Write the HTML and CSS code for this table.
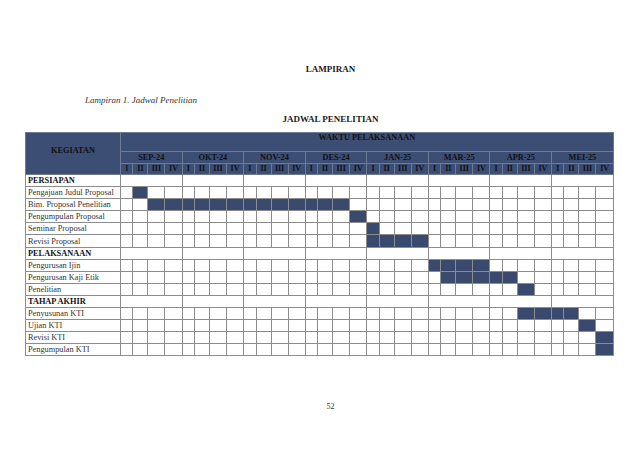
FILE: index.html
```html
<!DOCTYPE html>
<html lang="id">
<head>
<meta charset="utf-8">
<title>Lampiran - Jadwal Penelitian</title>
<link rel="stylesheet" href="styles.css">
</head>
<body>
<div class="page">
  <h1 class="title">LAMPIRAN</h1>
  <p class="caption">Lampiran 1. Jadwal Penelitian</p>
  <h2 class="heading">JADWAL PENELITIAN</h2>
  <table class="gantt">
    <colgroup>
      <col class="c-act">
      <col class="w1"><col class="w2"><col class="w3"><col class="w4">
      <col class="w1"><col class="w2"><col class="w3"><col class="w4">
      <col class="w1"><col class="w2"><col class="w3"><col class="w4">
      <col class="w1"><col class="w2"><col class="w3"><col class="w4">
      <col class="w1"><col class="w2"><col class="w3"><col class="w4">
      <col class="w1"><col class="w2"><col class="w3"><col class="w4">
      <col class="w1"><col class="w2"><col class="w3"><col class="w4">
      <col class="w1"><col class="w2"><col class="w3"><col class="w4">
    </colgroup>
    <thead>
      <tr class="h1">
        <th rowspan="3" class="kegiatan">KEGIATAN</th>
        <th colspan="32" class="waktu">WAKTU PELAKSANAAN</th>
      </tr>
      <tr class="h2">
        <th colspan="4">SEP-24</th>
        <th colspan="4">OKT-24</th>
        <th colspan="4">NOV-24</th>
        <th colspan="4">DES-24</th>
        <th colspan="4">JAN-25</th>
        <th colspan="4">MAR-25</th>
        <th colspan="4">APR-25</th>
        <th colspan="4">MEI-25</th>
      </tr>
      <tr class="h3">
        <th>I</th><th>II</th><th>III</th><th>IV</th>
        <th>I</th><th>II</th><th>III</th><th>IV</th>
        <th>I</th><th>II</th><th>III</th><th>IV</th>
        <th>I</th><th>II</th><th>III</th><th>IV</th>
        <th>I</th><th>II</th><th>III</th><th>IV</th>
        <th>I</th><th>II</th><th>III</th><th>IV</th>
        <th>I</th><th>II</th><th>III</th><th>IV</th>
        <th>I</th><th>II</th><th>III</th><th>IV</th>
      </tr>
    </thead>
    <tbody>
      <tr class="cat">
        <td class="act">PERSIAPAN</td>
        <td colspan="4"></td><td colspan="4"></td><td colspan="4"></td><td colspan="4"></td>
        <td colspan="4"></td><td colspan="4"></td><td colspan="4"></td><td colspan="4"></td>
      </tr>
      <tr>
        <td class="act">Pengajuan Judul Proposal</td>
        <td></td><td class="f"></td><td></td><td></td>
        <td></td><td></td><td></td><td></td>
        <td></td><td></td><td></td><td></td>
        <td></td><td></td><td></td><td></td>
        <td></td><td></td><td></td><td></td>
        <td></td><td></td><td></td><td></td>
        <td></td><td></td><td></td><td></td>
        <td></td><td></td><td></td><td></td>
      </tr>
      <tr>
        <td class="act">Bim. Proposal Penelitian</td>
        <td></td><td></td><td class="f"></td><td class="f"></td>
        <td class="f"></td><td class="f"></td><td class="f"></td><td class="f"></td>
        <td class="f"></td><td class="f"></td><td class="f"></td><td class="f"></td>
        <td class="f"></td><td class="f"></td><td class="f"></td><td></td>
        <td></td><td></td><td></td><td></td>
        <td></td><td></td><td></td><td></td>
        <td></td><td></td><td></td><td></td>
        <td></td><td></td><td></td><td></td>
      </tr>
      <tr>
        <td class="act">Pengumpulan Proposal</td>
        <td></td><td></td><td></td><td></td>
        <td></td><td></td><td></td><td></td>
        <td></td><td></td><td></td><td></td>
        <td></td><td></td><td></td><td class="f"></td>
        <td></td><td></td><td></td><td></td>
        <td></td><td></td><td></td><td></td>
        <td></td><td></td><td></td><td></td>
        <td></td><td></td><td></td><td></td>
      </tr>
      <tr>
        <td class="act">Seminar Proposal</td>
        <td></td><td></td><td></td><td></td>
        <td></td><td></td><td></td><td></td>
        <td></td><td></td><td></td><td></td>
        <td></td><td></td><td></td><td></td>
        <td class="f"></td><td></td><td></td><td></td>
        <td></td><td></td><td></td><td></td>
        <td></td><td></td><td></td><td></td>
        <td></td><td></td><td></td><td></td>
      </tr>
      <tr>
        <td class="act">Revisi Proposal</td>
        <td></td><td></td><td></td><td></td>
        <td></td><td></td><td></td><td></td>
        <td></td><td></td><td></td><td></td>
        <td></td><td></td><td></td><td></td>
        <td class="f"></td><td class="f"></td><td class="f"></td><td class="f"></td>
        <td></td><td></td><td></td><td></td>
        <td></td><td></td><td></td><td></td>
        <td></td><td></td><td></td><td></td>
      </tr>
      <tr class="cat">
        <td class="act">PELAKSANAAN</td>
        <td colspan="4"></td><td colspan="4"></td><td colspan="4"></td><td colspan="4"></td>
        <td colspan="4"></td><td colspan="4"></td><td colspan="4"></td><td colspan="4"></td>
      </tr>
      <tr>
        <td class="act">Pengurusan Ijin</td>
        <td></td><td></td><td></td><td></td>
        <td></td><td></td><td></td><td></td>
        <td></td><td></td><td></td><td></td>
        <td></td><td></td><td></td><td></td>
        <td></td><td></td><td></td><td></td>
        <td class="f"></td><td class="f"></td><td class="f"></td><td class="f"></td>
        <td></td><td></td><td></td><td></td>
        <td></td><td></td><td></td><td></td>
      </tr>
      <tr>
        <td class="act">Pengurusan Kaji Etik</td>
        <td></td><td></td><td></td><td></td>
        <td></td><td></td><td></td><td></td>
        <td></td><td></td><td></td><td></td>
        <td></td><td></td><td></td><td></td>
        <td></td><td></td><td></td><td></td>
        <td></td><td class="f"></td><td class="f"></td><td class="f"></td>
        <td class="f"></td><td class="f"></td><td></td><td></td>
        <td></td><td></td><td></td><td></td>
      </tr>
      <tr>
        <td class="act">Penelitian</td>
        <td></td><td></td><td></td><td></td>
        <td></td><td></td><td></td><td></td>
        <td></td><td></td><td></td><td></td>
        <td></td><td></td><td></td><td></td>
        <td></td><td></td><td></td><td></td>
        <td></td><td></td><td></td><td></td>
        <td></td><td></td><td class="f"></td><td></td>
        <td></td><td></td><td></td><td></td>
      </tr>
      <tr class="cat">
        <td class="act">TAHAP AKHIR</td>
        <td colspan="4"></td><td colspan="4"></td><td colspan="4"></td><td colspan="4"></td>
        <td colspan="4"></td><td colspan="4"></td><td colspan="4"></td><td colspan="4"></td>
      </tr>
      <tr>
        <td class="act">Penyusunan KTI</td>
        <td></td><td></td><td></td><td></td>
        <td></td><td></td><td></td><td></td>
        <td></td><td></td><td></td><td></td>
        <td></td><td></td><td></td><td></td>
        <td></td><td></td><td></td><td></td>
        <td></td><td></td><td></td><td></td>
        <td></td><td></td><td class="f"></td><td class="f"></td>
        <td class="f"></td><td class="f"></td><td></td><td></td>
      </tr>
      <tr>
        <td class="act">Ujian KTI</td>
        <td></td><td></td><td></td><td></td>
        <td></td><td></td><td></td><td></td>
        <td></td><td></td><td></td><td></td>
        <td></td><td></td><td></td><td></td>
        <td></td><td></td><td></td><td></td>
        <td></td><td></td><td></td><td></td>
        <td></td><td></td><td></td><td></td>
        <td></td><td></td><td class="f"></td><td></td>
      </tr>
      <tr>
        <td class="act">Revisi KTI</td>
        <td></td><td></td><td></td><td></td>
        <td></td><td></td><td></td><td></td>
        <td></td><td></td><td></td><td></td>
        <td></td><td></td><td></td><td></td>
        <td></td><td></td><td></td><td></td>
        <td></td><td></td><td></td><td></td>
        <td></td><td></td><td></td><td></td>
        <td></td><td></td><td></td><td class="f"></td>
      </tr>
      <tr>
        <td class="act">Pengumpulan KTI</td>
        <td></td><td></td><td></td><td></td>
        <td></td><td></td><td></td><td></td>
        <td></td><td></td><td></td><td></td>
        <td></td><td></td><td></td><td></td>
        <td></td><td></td><td></td><td></td>
        <td></td><td></td><td></td><td></td>
        <td></td><td></td><td></td><td></td>
        <td></td><td></td><td></td><td class="f"></td>
      </tr>
    </tbody>
  </table>
  <p class="pagenum">52</p>
</div>
</body>
</html>
```

FILE: styles.css
```css
html, body {
  margin: 0;
  padding: 0;
  background: #ffffff;
}

.page {
  width: 640px;
  height: 452px;
  padding-top: 64px;
  box-sizing: border-box;
  font-family: "Liberation Serif", "Times New Roman", serif;
  color: #1a1a1a;
  overflow: hidden;
}

.title,
.heading {
  margin: 0;
  padding-left: 21px;
  font-size: 9px;
  line-height: 11px;
  font-weight: bold;
  text-align: center;
}

.caption {
  margin: 20px 0 0 85px;
  font-size: 9px;
  line-height: 11px;
  font-style: italic;
  color: #333;
}

.heading {
  margin-top: 8px;
}

.gantt {
  margin: 7px 0 0 25px;
  width: 588px;
  table-layout: fixed;
  border-collapse: collapse;
  font-size: 8.3px;
}

.c-act { width: 95px; }
.w1 { width: 12.4px; }
.w2 { width: 15px; }
.w3 { width: 17px; }
.w4 { width: 17.2px; }

.gantt th {
  background: #3d4e74;
  color: #111;
  font-weight: bold;
  padding: 0;
  border: 1px solid #6f7b94;
  text-align: center;
  white-space: nowrap;
  overflow: hidden;
}

.h1 th { height: 18px; }
.h1 .waktu {
  vertical-align: top;
  line-height: 10px;
}
.h1 .kegiatan {
  vertical-align: middle;
  padding-bottom: 6px;
}
.h2 th { height: 11px; line-height: 11px; }
.h3 th { height: 10px; line-height: 10px; font-size: 8px; }

.gantt td {
  height: 11.1px;
  padding: 0;
  border: 1px solid #8c8c8c;
  background: #fff;
  line-height: 11px;
}

.gantt td.act {
  padding-left: 2px;
  white-space: nowrap;
  overflow: hidden;
  color: #333;
}

.cat td.act {
  font-weight: bold;
  color: #111;
}

.gantt td.f {
  background: #3a4a6e;
}

.pagenum {
  margin: 46px 0 0 0;
  padding-left: 21px;
  text-align: center;
  font-size: 8px;
  line-height: 10px;
  color: #333;
}
```
